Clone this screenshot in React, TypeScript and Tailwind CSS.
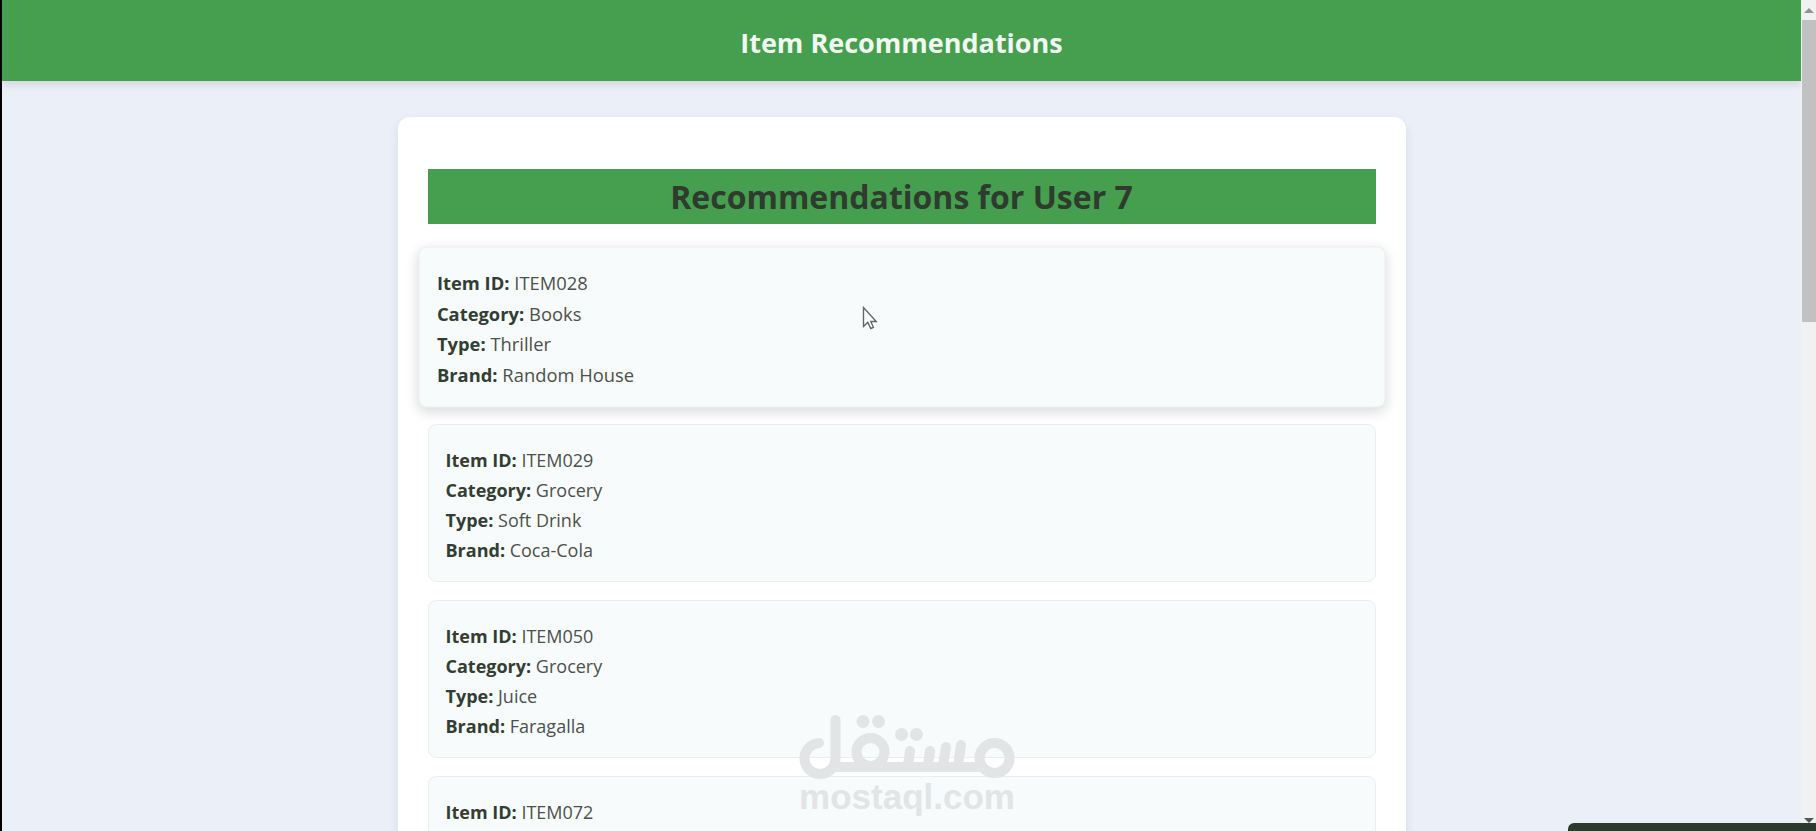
type Item = { id: string; category?: string; type?: string; brand?: string };

const ITEMS: Item[] = [
  { id: "ITEM028", category: "Books", type: "Thriller", brand: "Random House" },
  { id: "ITEM029", category: "Grocery", type: "Soft Drink", brand: "Coca-Cola" },
  { id: "ITEM050", category: "Grocery", type: "Juice", brand: "Faragalla" },
  { id: "ITEM072" },
];

function Field({ label, value }: { label: string; value?: string }) {
  if (!value) return null;
  return (
    <p>
      <strong className="font-bold text-[#323e33]">{label}:</strong> {value}
    </p>
  );
}

function ItemCard({ item, active }: { item: Item; active: boolean }) {
  return (
    <li
      className={`rounded-lg border border-[#eceeee] bg-[#f8fbfc] px-[17px] pt-5 pb-4 ${
        active ? "scale-102 shadow-[0_4px_12px_rgba(0,0,0,0.15)]" : ""
      }`}
    >
      <Field label="Item ID" value={item.id} />
      <Field label="Category" value={item.category} />
      <Field label="Type" value={item.type} />
      <Field label="Brand" value={item.brand} />
    </li>
  );
}

function Cursor() {
  return (
    <svg className="absolute top-[306px] left-[860px] h-6 w-4" viewBox="0 0 16 24" fill="#fff" stroke="#666" strokeWidth="1.4">
      <path d="M1.5 1.5v19l4.3-4 3 6 2.6-1.2-2.6-5.8h5.4z" />
    </svg>
  );
}

function Watermark() {
  return (
    <div className="pointer-events-none absolute inset-x-0 bottom-4 flex flex-col items-center pr-1 text-[#e2e4e5]">
      <svg className="h-16 w-[216px]" viewBox="0 0 216 64" fill="none" stroke="currentColor" strokeWidth="10" strokeLinecap="round" role="img" aria-label="مستقل">
        <path d="M20 28a15.500 15.500 0 1 0 16.500 15V5" />
        <path d="M36 52h150" strokeLinecap="butt" />
        <circle cx="71.500" cy="37" r="14" />
        <circle cx="195.500" cy="43" r="15" />
        <path d="M111 36l-2 14M131 36l-2 14M147 32l-3 18M162 30l-3 20" />
        <g fill="currentColor" stroke="none">
          <circle cx="64" cy="6.500" r="6.500" />
          <circle cx="79.500" cy="6.500" r="6.500" />
          <circle cx="102.500" cy="19.500" r="6.500" />
          <circle cx="117.500" cy="19.500" r="6.500" />
        </g>
      </svg>
      <span className="font-['Liberation_Sans',sans-serif] text-[35px] leading-9 font-bold">mostaql.com</span>
    </div>
  );
}

function Scrollbar() {
  return (
    <div className="flex w-[15px] shrink-0 flex-col items-center justify-between bg-[#f0f2f2] pl-px">
      <div className="flex w-full flex-col items-center">
        <svg className="h-5 w-3" viewBox="0 0 12 20" fill="#909392">
          <path d="M6 8l5 5H1z" />
        </svg>
        <div className="h-[302px] w-full bg-[#c1c1c1]" />
      </div>
      <svg className="h-4 w-3" viewBox="0 0 12 16" fill="#555">
        <path d="M1 3h10l-5 5z" />
      </svg>
    </div>
  );
}

export default function App() {
  return (
    <div className="relative flex h-screen overflow-hidden border-l-2 border-black bg-[#ebeff7] font-['Open_Sans','Noto_Sans',sans-serif] text-[#4b504c]">
      <div className="min-w-0 flex-1 overflow-hidden">
        <header className="bg-[#459f4e] pt-[22px] pb-[18px] text-center shadow-[0_4px_8px_rgba(0,0,0,0.1)]">
          <h1 className="text-[27px] leading-[41px] font-bold text-[#f1f8f2]">Item Recommendations</h1>
        </header>
        <main className="mx-auto mt-9 max-w-[1008px] rounded-xl bg-white px-[30px] pt-[52px] pb-8 shadow-[0_4px_12px_rgba(0,0,0,0.08)]">
          <h2 className="bg-[#459f4e] pt-px text-center text-[32px] leading-[54px] font-bold text-[#2e3b2e]">
            Recommendations for User 7
          </h2>
          <ul className="mt-6 flex flex-col gap-[18px] text-lg leading-[30px]">
            {ITEMS.map((item, index) => (
              <ItemCard key={item.id} item={item} active={index === 0} />
            ))}
          </ul>
        </main>
      </div>
      <Scrollbar />
      <Cursor />
      <Watermark />
      <div className="absolute right-0 bottom-0 h-2 w-[248px] rounded-tl-md bg-[#2d3b2e]" />
    </div>
  );
}
